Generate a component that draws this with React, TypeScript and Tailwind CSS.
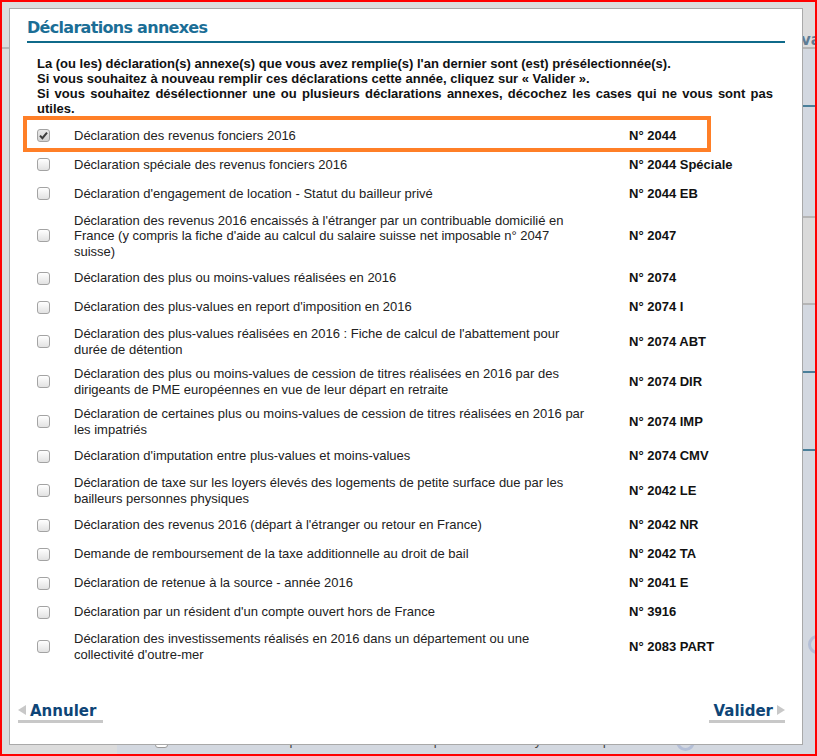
import React from "react";

type Item = { lines: string[]; code: string; checked?: boolean };

const items: Item[] = [
  { lines: ["Déclaration des revenus fonciers 2016"], code: "N° 2044", checked: true },
  { lines: ["Déclaration spéciale des revenus fonciers 2016"], code: "N° 2044 Spéciale" },
  { lines: ["Déclaration d'engagement de location - Statut du bailleur privé"], code: "N° 2044 EB" },
  {
    lines: [
      "Déclaration des revenus 2016 encaissés à l'étranger par un contribuable domicilié en",
      "France (y compris la fiche d'aide au calcul du salaire suisse net imposable n° 2047",
      "suisse)",
    ],
    code: "N° 2047",
  },
  { lines: ["Déclaration des plus ou moins-values réalisées en 2016"], code: "N° 2074" },
  { lines: ["Déclaration des plus-values en report d'imposition en 2016"], code: "N° 2074 I" },
  {
    lines: [
      "Déclaration des plus-values réalisées en 2016 : Fiche de calcul de l'abattement pour",
      "durée de détention",
    ],
    code: "N° 2074 ABT",
  },
  {
    lines: [
      "Déclaration des plus ou moins-values de cession de titres réalisées en 2016 par des",
      "dirigeants de PME européennes en vue de leur départ en retraite",
    ],
    code: "N° 2074 DIR",
  },
  {
    lines: [
      "Déclaration de certaines plus ou moins-values de cession de titres réalisées en 2016 par",
      "les impatriés",
    ],
    code: "N° 2074 IMP",
  },
  { lines: ["Déclaration d'imputation entre plus-values et moins-values"], code: "N° 2074 CMV" },
  {
    lines: [
      "Déclaration de taxe sur les loyers élevés des logements de petite surface due par les",
      "bailleurs personnes physiques",
    ],
    code: "N° 2042 LE",
  },
  { lines: ["Déclaration des revenus 2016 (départ à l'étranger ou retour en France)"], code: "N° 2042 NR" },
  { lines: ["Demande de remboursement de la taxe additionnelle au droit de bail"], code: "N° 2042 TA" },
  { lines: ["Déclaration de retenue à la source - année 2016"], code: "N° 2041 E" },
  { lines: ["Déclaration par un résident d'un compte ouvert hors de France"], code: "N° 3916" },
  {
    lines: [
      "Déclaration des investissements réalisés en 2016 dans un département ou une",
      "collectivité d'outre-mer",
    ],
    code: "N° 2083 PART",
  },
];

function CheckBox({ checked }: { checked?: boolean }) {
  return (
    <div
      className={
        "relative w-[13px] h-[13px] rounded-[3px] border border-[#a3a3a3] " +
        (checked ? "bg-gradient-to-b from-[#e9e9e9] to-[#d2d2d2]" : "bg-gradient-to-b from-white to-[#e2e2e2]")
      }
    >
      {checked && (
        <svg viewBox="0 0 13 13" className="absolute -left-px -top-px w-[13px] h-[13px]">
          <path d="M3 6.6 L5.4 9.2 L10 3.6" fill="none" stroke="#3c3c3c" strokeWidth="2" />
        </svg>
      )}
    </div>
  );
}

export default function App() {
  return (
    <div className="relative w-[817px] h-[756px] border-2 border-[#ff0000] overflow-hidden bg-[#dcdcdc] font-['Liberation_Sans',Arial,sans-serif]">
      {/* page behind the dialog */}
      <div className="flex flex-col h-full">
        <div className="h-[47px] border-b-2 border-[#b5b5b5] pl-[799px] pt-[26px] whitespace-nowrap overflow-hidden">
          <span className="font-['DejaVu_Sans',sans-serif] font-bold text-[15px] leading-[18px] text-[#5f7c94]">va</span>
        </div>
        <div className="flex flex-1">
          <div className="w-[115px] shrink-0 bg-[#dcdcdc]" />
          <div className="flex-1 min-w-0 flex flex-col bg-[#d3d8e0]">
            <div className="h-[58px] border-b-2 border-[#4a7f99]" />
            <div className="h-[109px]" />
            <div className="h-[89px] bg-[#dadada] border-y-2 border-[#b5b5b5]" />
            <div className="h-[68px] border-b-2 border-[#4a7f99]" />
            <div className="h-[78px] border-b-2 border-[#4a7f99]" />
            <div className="h-[184px]" />
            <div className="h-[20px] pl-[691px]">
              <div className="w-[19px] h-[19px] rounded-full border-[3px] border-[#b4bfd7]" />
            </div>
            <div className="h-[73px]" />
            <div className="h-[26px] flex items-center text-[13px] text-[#444] whitespace-nowrap">
              <div className="ml-[38px] w-[13px] h-[13px] rounded-[3px] border border-[#9a9a9a] bg-white" />
              <span className="ml-[39px] w-[469px]">Revenus exceptionnels ou différés à imposer suivant le système du quotient</span>
              <div className="w-[19px] h-[19px] rounded-full border-[3px] border-[#b4bfd7]" />
            </div>
          </div>
        </div>
      </div>

      {/* dialog */}
      <div className="absolute left-[7px] top-[6px] w-[794px] h-[737px] bg-white border border-[#a9a9a9] flex flex-col">
        <div className="px-[17px] pt-[9px]">
          <h2 className="font-['DejaVu_Sans',sans-serif] font-bold text-[16px] leading-[20px] tracking-[-0.7px] text-[#1b6e96] pb-[3px] border-b-2 border-[#0f6a8a]">
            Déclarations annexes
          </h2>

          <div className="mt-[13px] pl-[10px] pr-[12px] font-bold text-[13px] leading-[15px] text-[#111] text-justify">
            <div>La (ou les) déclaration(s) annexe(s) que vous avez remplie(s) l'an dernier sont (est) présélectionnée(s).</div>
            <div>Si vous souhaitez à nouveau remplir ces déclarations cette année, cliquez sur « Valider ».</div>
            <div>
              Si vous souhaitez désélectionner une ou plusieurs déclarations annexes, décochez les cases qui ne vous sont pas
              utiles.
            </div>
          </div>

          <div className="mt-[5px] flex flex-col">
            {items.map((it, i) => (
              <div key={i} className="flex items-center min-h-[29px] py-[4.5px] text-[13px] leading-[15.5px]">
                <div className="w-[47px] pl-[10px] shrink-0">
                  <CheckBox checked={it.checked} />
                </div>
                <div className="w-[555px] shrink-0 text-[#222] whitespace-nowrap">
                  {it.lines.map((l, j) => (
                    <div key={j}>{l}</div>
                  ))}
                </div>
                <div className="font-bold text-[#111] whitespace-nowrap">{it.code}</div>
              </div>
            ))}
          </div>
        </div>

        <div className="mt-auto flex justify-between pl-[8px] pr-[17px] pb-[21px] font-['DejaVu_Sans',sans-serif] font-bold text-[15px] leading-[18px] text-[#0e4577]">
          <div className="flex items-start w-[85px] border-b-[3px] border-[#c8c8c8]">
            <div className="mt-[3px] w-0 h-0 border-y-[5px] border-y-transparent border-r-[8px] border-r-[#c8c8c8]" />
            <span className="ml-[4px]">Annuler</span>
          </div>
          <div className="flex items-start justify-end w-[76px] border-b-[3px] border-[#c8c8c8]">
            <span>Valider</span>
            <div className="ml-[4px] mt-[3px] w-0 h-0 border-y-[5px] border-y-transparent border-l-[8px] border-l-[#c8c8c8]" />
          </div>
        </div>
      </div>

      {/* highlight frame around the preselected row */}
      <div className="absolute left-[21px] top-[114px] w-[688px] h-[36px] border-4 border-[#ff7f27]" />
    </div>
  );
}
